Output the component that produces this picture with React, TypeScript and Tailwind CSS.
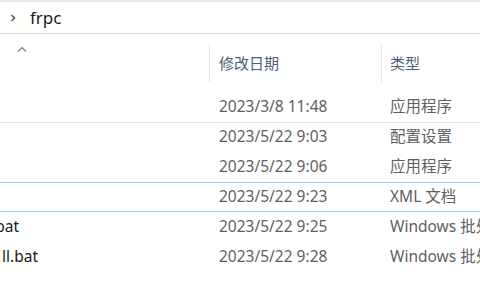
import React from 'react';

const rows = [
  { name: '', nameEnd: 0, date: '2023/3/8 11:48', type: '应用程序' },
  { name: '', nameEnd: 0, date: '2023/5/22 9:03', type: '配置设置' },
  { name: '', nameEnd: 0, date: '2023/5/22 9:06', type: '应用程序' },
  { name: '', nameEnd: 0, date: '2023/5/22 9:23', type: 'XML 文档' },
  { name: 'bat', nameEnd: 19, date: '2023/5/22 9:25', type: 'Windows 批处理文件' },
  { name: 'll.bat', nameEnd: 38, date: '2023/5/22 9:28', type: 'Windows 批处理文件' },
];

const App: React.FC = () => {
  return (
    <div
      className="w-[480px] h-[300px] overflow-hidden bg-white"
      style={{ fontFamily: '"Noto Sans", "Noto Sans CJK SC", sans-serif' }}
    >
      <div className="h-[2px] bg-[#e8e8e8]" />
      <div className="h-[32px] border-b border-[#d9d9d9] flex items-center">
        <svg className="ml-[8px] w-[10px] h-[10px]" viewBox="0 0 10 10">
          <path d="M3.5 2 L6.5 5 L3.5 8" fill="none" stroke="#5a5a5a" strokeWidth="1.6" />
        </svg>
        <span className="ml-[12px] text-[17px] text-[#1a1a1a] leading-none">frpc</span>
      </div>
      <div className="h-[58px] flex relative">
        <div className="w-[209px] relative">
          <svg className="absolute left-[17px] top-[12px] w-[10px] h-[6px]" viewBox="0 0 10 6">
            <path d="M1 5.5 L5 1.5 L9 5.5" fill="none" stroke="#7a7a7a" strokeWidth="1.1" />
          </svg>
        </div>
        <div className="w-[172px] flex items-center">
          <div className="w-px h-[38px] bg-[#e5e5e5]" />
          <span className="ml-[9px] text-[15px] text-[#4c607a]">修改日期</span>
        </div>
        <div className="flex-1 flex items-center">
          <div className="w-px h-[38px] bg-[#e5e5e5]" />
          <span className="ml-[8px] text-[15px] text-[#4c607a]">类型</span>
        </div>
      </div>
      <div>
        {rows.map((r, i) => (
          <div
            key={i}
            className={`h-[30px] flex items-center text-[15.5px] border-y ${
              i === 3
                ? 'border-[#99d1ff]'
                : i === 1
                ? 'border-t-[#cce8ff] border-b-transparent'
                : 'border-transparent'
            }`}
          >
            <div className="w-[209px] overflow-hidden flex justify-end">
              <span
                className="text-[#1a1a1a] whitespace-nowrap"
                style={{ marginRight: 209 - r.nameEnd }}
              >
                {r.name}
              </span>
            </div>
            <div className="w-[172px] pl-[10px] text-[#5f5f5f] whitespace-nowrap">{r.date}</div>
            <div className="flex-1 pl-[9px] text-[#5f5f5f] whitespace-nowrap overflow-hidden">{r.type}</div>
          </div>
        ))}
      </div>
    </div>
  );
};

export default App;
